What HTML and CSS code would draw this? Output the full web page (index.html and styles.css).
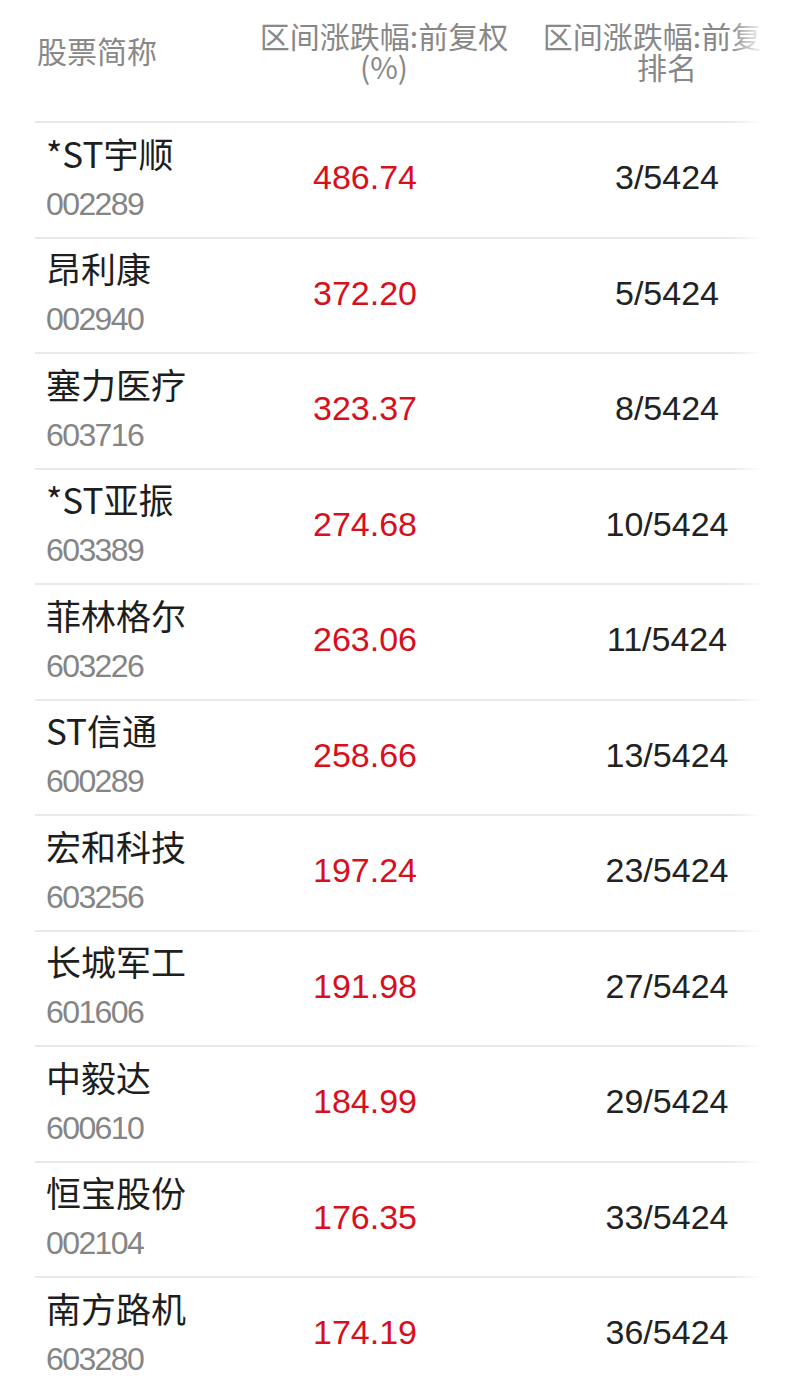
FILE: index.html
```html
<!DOCTYPE html>
<html lang="zh-CN">
<head>
  <meta charset="UTF-8" />
  <meta name="viewport" content="width=device-width, initial-scale=1.0" />
  <title>区间涨跌幅排名</title>
  <link rel="stylesheet" href="styles.css">
</head>
<body>
  <div class="board">
    <div class="row head">
      <div class="cell name-col">股票简称</div>
      <div class="cell chg-col">
        <span class="line">区间涨跌幅:前复权</span>
        <span class="line">(%)</span>
      </div>
      <div class="cell rank-col">
        <span class="line">区间涨跌幅:前复权</span>
        <span class="line">排名</span>
      </div>
    </div>

    <div class="row">
      <div class="cell name-col"><span class="name">*ST宇顺</span><span class="code">002289</span></div>
      <div class="cell chg-col val">486.74</div>
      <div class="cell rank-col rank">3/5424</div>
    </div>
    <div class="row">
      <div class="cell name-col"><span class="name">昂利康</span><span class="code">002940</span></div>
      <div class="cell chg-col val">372.20</div>
      <div class="cell rank-col rank">5/5424</div>
    </div>
    <div class="row">
      <div class="cell name-col"><span class="name">塞力医疗</span><span class="code">603716</span></div>
      <div class="cell chg-col val">323.37</div>
      <div class="cell rank-col rank">8/5424</div>
    </div>
    <div class="row">
      <div class="cell name-col"><span class="name">*ST亚振</span><span class="code">603389</span></div>
      <div class="cell chg-col val">274.68</div>
      <div class="cell rank-col rank">10/5424</div>
    </div>
    <div class="row">
      <div class="cell name-col"><span class="name">菲林格尔</span><span class="code">603226</span></div>
      <div class="cell chg-col val">263.06</div>
      <div class="cell rank-col rank">11/5424</div>
    </div>
    <div class="row">
      <div class="cell name-col"><span class="name">ST信通</span><span class="code">600289</span></div>
      <div class="cell chg-col val">258.66</div>
      <div class="cell rank-col rank">13/5424</div>
    </div>
    <div class="row">
      <div class="cell name-col"><span class="name">宏和科技</span><span class="code">603256</span></div>
      <div class="cell chg-col val">197.24</div>
      <div class="cell rank-col rank">23/5424</div>
    </div>
    <div class="row">
      <div class="cell name-col"><span class="name">长城军工</span><span class="code">601606</span></div>
      <div class="cell chg-col val">191.98</div>
      <div class="cell rank-col rank">27/5424</div>
    </div>
    <div class="row">
      <div class="cell name-col"><span class="name">中毅达</span><span class="code">600610</span></div>
      <div class="cell chg-col val">184.99</div>
      <div class="cell rank-col rank">29/5424</div>
    </div>
    <div class="row">
      <div class="cell name-col"><span class="name">恒宝股份</span><span class="code">002104</span></div>
      <div class="cell chg-col val">176.35</div>
      <div class="cell rank-col rank">33/5424</div>
    </div>
    <div class="row">
      <div class="cell name-col"><span class="name">南方路机</span><span class="code">603280</span></div>
      <div class="cell chg-col val">174.19</div>
      <div class="cell rank-col rank">36/5424</div>
    </div>
  </div>
</body>
</html>
```

FILE: styles.css
```css
html, body {
  margin: 0;
  padding: 0;
  background: white;
  color: #222;
  font-family: "Noto Sans CJK SC", "Noto Sans", sans-serif;
}

.board {
  position: relative;
  width: 735px;
  margin-left: 35px;
  overflow: hidden;
}

.board::after {
  content: "";
  position: absolute;
  top: 0;
  right: 0;
  width: 40px;
  height: 100%;
  background: linear-gradient(to right, rgba(255, 255, 255, 0), #fff 85%);
}

.row {
  display: grid;
  grid-template-columns: 193px 252px 254px;
  column-gap: 30px;
  align-items: center;
  height: 113.5px;
  border-bottom: 2px solid #e9e9e9;
}

.row:last-child {
  border-bottom: none;
}

.head {
  height: 121px;
  color: #888;
  font-size: 30px;
  line-height: 31px;
}

.head .cell {
  text-align: center;
  white-space: nowrap;
}

.head .name-col {
  text-align: left;
  padding-left: 2px;
  padding-top: 0;
  margin-top: -20px;
}

.head .chg-col,
.head .rank-col {
  margin-top: -20px;
}

.line {
  display: block;
}

.name-col {
  display: flex;
  flex-direction: column;
  padding-left: 11px;
  padding-top: 4px;
}

.name {
  font-size: 35px;
  line-height: 40px;
  color: #1e1e1e;
  white-space: nowrap;
}

.code {
  font-family: "Liberation Sans", Arial, sans-serif;
  font-size: 32px;
  letter-spacing: -1.6px;
  line-height: 54px;
  padding-top: 4px;
  color: #858585;
}

.val,
.rank {
  font-family: "Liberation Sans", Arial, sans-serif;
  font-size: 34px;
  text-align: center;
  white-space: nowrap;
  padding-bottom: 4px;
}

.val {
  color: #d7101d;
  padding-right: 38px;
}

.rank {
  color: #222;
}
```
